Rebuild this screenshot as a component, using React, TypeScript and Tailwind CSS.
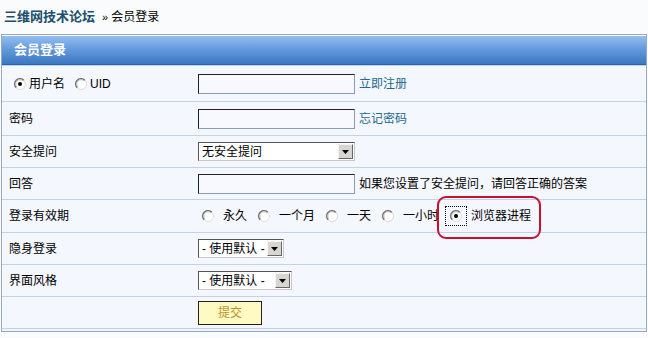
import React from "react";

function Radio({ checked }: { checked?: boolean }) {
  return (
    <svg width="12" height="12" viewBox="0 0 12 12" className="shrink-0">
      <circle cx="6" cy="6" r="5.5" fill="#fff" stroke="#dcdcdc" strokeWidth="1" />
      <path d="M2.2 9.8 A5.3 5.3 0 0 1 9.8 2.2" stroke="#707070" strokeWidth="1.3" fill="none" />
      <path d="M3 9 A4.2 4.2 0 0 1 9 3" stroke="#b0b0b0" strokeWidth="0.8" fill="none" />
      {checked && <circle cx="6" cy="6" r="2" fill="#000" />}
    </svg>
  );
}

function TextBox() {
  return (
    <div className="w-[157px] h-[20px] bg-[#f8f9ff] border border-t-[#222] border-l-[#222] border-r-[#8a9bb5] border-b-[#8a9bb5]" />
  );
}

function Select({ text, width, gap }: { text: string; width: string; gap?: boolean }) {
  return (
    <div className={`${width} h-[19px] bg-white border border-t-[#555] border-l-[#555] border-r-[#c8c8c8] border-b-[#c8c8c8] flex items-center justify-between pl-[3px] pr-px`}>
      <span className="leading-none">{text}</span>
      <span className={`w-[15px] h-[15px] bg-[#d8d6d0] border border-t-[#f4f4f4] border-l-[#f4f4f4] border-r-[#666] border-b-[#666] flex items-center justify-center ${gap ? "" : ""}`}>
        <svg width="7" height="4" viewBox="0 0 7 4">
          <path d="M0 0 H7 L3.5 4 Z" fill="#000" />
        </svg>
      </span>
    </div>
  );
}

function Row({ label, height, children }: { label?: React.ReactNode; height: string; children?: React.ReactNode }) {
  return (
    <div className={`flex items-center ${height} border-b border-[#c3d3e6]`}>
      <div className="w-[196px] pl-[7px] flex items-center">{label}</div>
      <div className="flex items-center">{children}</div>
    </div>
  );
}

const link = "text-[#23698c] ml-[4px]";

export default function App() {
  return (
    <div className="relative w-[648px] h-[338px] bg-[#fafbfd] text-[12px] text-black font-['Liberation_Sans','Noto_Sans_CJK_SC',sans-serif] overflow-hidden">
      <div className="h-[34px] flex items-center pl-[4px]">
        <span className="font-bold text-[13px] text-[#1b4f6b]">三维网技术论坛</span>
        <span className="ml-[7px] mr-[3px] text-[11px]">»</span>
        <span>会员登录</span>
      </div>

      <div className="ml-px mr-px border-x border-t border-[#98a9bf]">
        <div className="h-[29px] bg-linear-to-b from-[#95bdef] via-[#6198da] to-[#3c77c2] border-t border-white flex items-center pl-[12px]">
          <span className="font-bold text-[13px] text-white">会员登录</span>
        </div>
        <div className="h-px bg-[#2f62a6]" />
        <div className="h-px bg-[#bcd5f3]" />

        <div className="bg-[#f5f7fe]">
          <Row
            height="h-[36px]"
            label={
              <div className="flex items-center pl-[5px]">
                <Radio checked />
                <span className="ml-[3px]">用户名</span>
                <span className="ml-[10px]"><Radio /></span>
                <span className="ml-[3px]">UID</span>
              </div>
            }
          >
            <TextBox />
            <span className={link}>立即注册</span>
          </Row>
          <Row height="h-[34px]" label="密码">
            <TextBox />
            <span className={link}>忘记密码</span>
          </Row>
          <Row height="h-[32px]" label="安全提问">
            <Select text="无安全提问" width="w-[157px]" />
          </Row>
          <Row height="h-[32px]" label="回答">
            <TextBox />
            <span className="ml-[4px]">如果您设置了安全提问，请回答正确的答案</span>
          </Row>
          <Row height="h-[33px]" label="登录有效期">
            <div className="flex items-center pl-[4px]">
              <Radio />
              <span className="ml-[9px] mr-[11px]">永久</span>
              <Radio />
              <span className="ml-[9px] mr-[11px]">一个月</span>
              <Radio />
              <span className="ml-[9px] mr-[11px]">一天</span>
              <Radio />
              <span className="ml-[9px] mr-[6px]">一小时</span>
              <span className="w-[22px] h-[20px] border border-dotted border-black flex items-center justify-center">
                <Radio checked />
              </span>
              <span className="ml-[4px]">浏览器进程</span>
            </div>
          </Row>
          <Row height="h-[32px]" label="隐身登录">
            <Select text="- 使用默认 -" width="w-[86px]" />
          </Row>
          <Row height="h-[32px]" label="界面风格">
            <Select text="- 使用默认 -" width="w-[94px]" />
          </Row>
          <Row height="h-[32px]">
            <button className="w-[64px] h-[24px] bg-[#fff9c2] border border-[#222] text-[#b8952e] text-[12px]">
              提交
            </button>
          </Row>
        </div>
        <div className="h-[2px] bg-[#f0f3fa]" />
        <div className="h-px bg-[#98a9bf]" />
      </div>

      <div className="absolute left-[437px] top-[196px] w-[104px] h-[43px] border-[2.5px] border-[#c8102e] rounded-[9px]" />
    </div>
  );
}
